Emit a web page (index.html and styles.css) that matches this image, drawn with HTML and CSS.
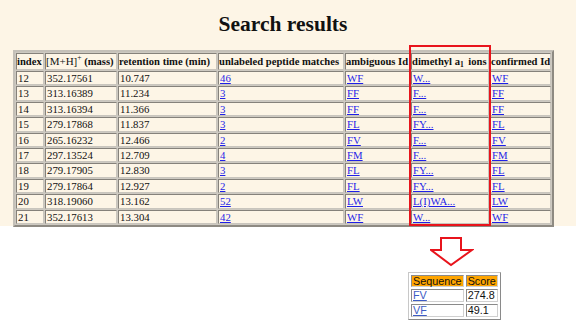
FILE: index.html
```html
<!DOCTYPE html>
<html>
<head>
<meta charset="utf-8">
<link rel="stylesheet" href="styles.css">
</head>
<body>
<div class="page">
  <h1 class="title">Search results</h1>
  <table class="results">
    <colgroup>
      <col class="c-idx"><col class="c-mass"><col class="c-ret"><col class="c-unl"><col class="c-amb"><col class="c-dim"><col class="c-conf">
    </colgroup>
    <tr class="head">
      <td>index</td>
      <td><span class="reg">[M+H]<sup>+</sup></span> (mass)</td>
      <td>retention time (min)</td>
      <td>unlabeled peptide matches</td>
      <td>ambiguous Id</td>
      <td>dimethyl a<sub>1</sub> ions</td>
      <td>confirmed Id</td>
    </tr>
    <tr><td>12</td><td>352.17561</td><td>10.747</td><td><a href="#">46</a></td><td><a href="#">WF</a></td><td><a href="#">W...</a></td><td><a href="#">WF</a></td></tr>
    <tr><td>13</td><td>313.16389</td><td>11.234</td><td><a href="#">3</a></td><td><a href="#">FF</a></td><td><a href="#">F...</a></td><td><a href="#">FF</a></td></tr>
    <tr><td>14</td><td>313.16394</td><td>11.366</td><td><a href="#">3</a></td><td><a href="#">FF</a></td><td><a href="#">F...</a></td><td><a href="#">FF</a></td></tr>
    <tr><td>15</td><td>279.17868</td><td>11.837</td><td><a href="#">3</a></td><td><a href="#">FL</a></td><td><a href="#">FY...</a></td><td><a href="#">FL</a></td></tr>
    <tr><td>16</td><td>265.16232</td><td>12.466</td><td><a href="#">2</a></td><td><a href="#">FV</a></td><td><a href="#">F...</a></td><td><a href="#">FV</a></td></tr>
    <tr><td>17</td><td>297.13524</td><td>12.709</td><td><a href="#">4</a></td><td><a href="#">FM</a></td><td><a href="#">F...</a></td><td><a href="#">FM</a></td></tr>
    <tr><td>18</td><td>279.17905</td><td>12.830</td><td><a href="#">3</a></td><td><a href="#">FL</a></td><td><a href="#">FY...</a></td><td><a href="#">FL</a></td></tr>
    <tr><td>19</td><td>279.17864</td><td>12.927</td><td><a href="#">2</a></td><td><a href="#">FL</a></td><td><a href="#">FY...</a></td><td><a href="#">FL</a></td></tr>
    <tr><td>20</td><td>318.19060</td><td>13.162</td><td><a href="#">52</a></td><td><a href="#">LW</a></td><td><a href="#">L(I)WA...</a></td><td><a href="#">LW</a></td></tr>
    <tr><td>21</td><td>352.17613</td><td>13.304</td><td><a href="#">42</a></td><td><a href="#">WF</a></td><td><a href="#">W...</a></td><td><a href="#">WF</a></td></tr>
  </table>
  <div class="highlight"></div>
</div>
<div class="lower">
  <svg class="arrow" width="44" height="30" viewBox="0 0 44 30">
    <path d="M11 1 H31 V13 H42 L21 28 L1 13 H11 Z" fill="#fff" stroke="#e8141c" stroke-width="2" stroke-linejoin="miter"/>
  </svg>
  <table class="scores">
    <tr class="shead"><td>Sequence</td><td>Score</td></tr>
    <tr><td><a href="#">FV</a></td><td>274.8</td></tr>
    <tr><td><a href="#">VF</a></td><td>49.1</td></tr>
  </table>
</div>
</body>
</html>
```

FILE: styles.css
```css
html, body {
  margin: 0;
  padding: 0;
  background: #ffffff;
}
body {
  width: 576px;
  height: 324px;
  overflow: hidden;
}
.page {
  position: relative;
  background: #fdf5e6;
  height: 226px;
  padding: 0 0 0 13px;
  font-family: "Liberation Serif", "Times New Roman", serif;
  color: #111;
}
.title {
  margin: 0;
  padding: 12px 0 0 0;
  height: 38px;
  box-sizing: border-box;
  line-height: 24px;
  font-size: 21.5px;
  font-weight: bold;
  text-align: center;
  width: 540px;
}
.results {
  table-layout: fixed;
  width: 541px;
  border: 2px solid #a9a59d;
  border-color: #c4c0b8 #8e8a82 #8e8a82 #c4c0b8;
  border-spacing: 1px;
  background: #cdc9c1;
  margin-top: 12px;
}
.c-idx { width: 28px; }
.c-mass { width: 72px; }
.c-ret { width: 99px; }
.c-unl { width: 126px; }
.c-amb { width: 65px; }
.c-dim { width: 78px; }
.results td {
  background: #fdf5e6;
  border: 1px solid;
  border-color: #85817a #c9c5bd #c9c5bd #85817a;
  padding: 0 0 0 1px;
  font-size: 10.8px;
  line-height: 12.4px;
  white-space: nowrap;
  overflow: hidden;
  vertical-align: middle;
}
.results tr.head td {
  font-weight: bold;
  font-size: 10.6px;
  line-height: 14px;
  padding: 0;
}
.results .reg {
  font-weight: normal;
  font-size: 11px;
}
.results sup {
  font-size: 7.5px;
  line-height: 0;
  vertical-align: 5px;
}
.results sub {
  font-size: 7.5px;
  line-height: 0;
  vertical-align: -2px;
  margin-right: 2px;
}
.results a {
  color: #1f1fe6;
  text-decoration: underline;
}
.highlight {
  position: absolute;
  left: 409px;
  top: 45px;
  width: 82px;
  height: 181px;
  box-sizing: border-box;
  border: 2px solid #e8141c;
}
.lower {
  display: flex;
  flex-direction: column;
  align-items: flex-start;
  padding-left: 408px;
}
.arrow {
  display: block;
  margin: 11px 0 0 22px;
}
.scores {
  margin-top: 5px;
  width: 84px;
  border: 1px solid #9a9a9a;
  border-color: #c8c8c8 #8a8a8a #8a8a8a #c8c8c8;
  border-spacing: 2px;
  background: #fff;
  font-family: "Liberation Sans", Arial, sans-serif;
  font-size: 10.8px;
}
.scores td {
  border: 1px solid;
  border-color: #8a8a8a #d0d0d0 #d0d0d0 #8a8a8a;
  padding: 0 1px;
  line-height: 11px;
  white-space: nowrap;
  color: #111;
}
.scores tr.shead td {
  background: #ffa500;
  line-height: 10px;
}
.scores a {
  color: #3d5bc4;
  text-decoration: underline;
}
```
